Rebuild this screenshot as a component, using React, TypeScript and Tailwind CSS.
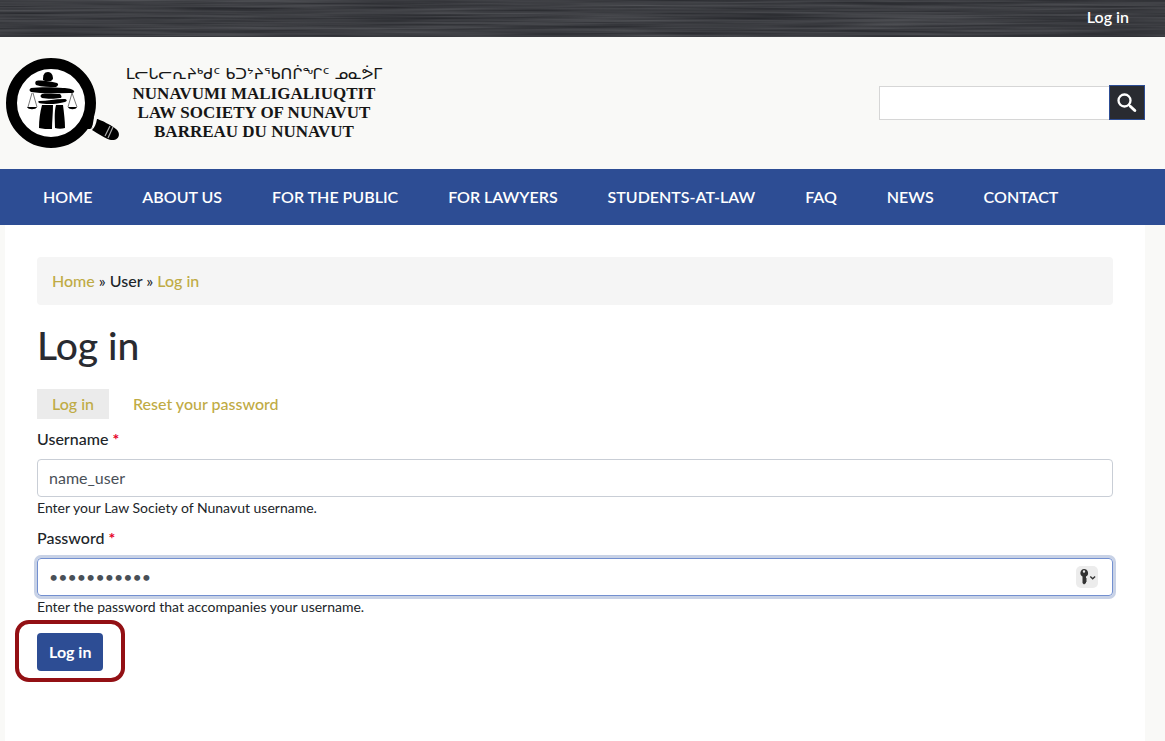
const navItems = ['Home', 'About us', 'For the public', 'For lawyers', 'Students-at-law', 'FAQ', 'News', 'Contact'];

function WoodGrain() {
  return (
    <svg className="absolute inset-0 h-full w-full" aria-hidden="true">
      <filter id="grain" x="0" y="0" width="100%" height="100%" colorInterpolationFilters="sRGB">
        <feTurbulence type="fractalNoise" baseFrequency="0.006 0.4" numOctaves="3" seed="8" />
        <feColorMatrix values="0.22 0 0 0 0.125  0.22 0 0 0 0.13  0.22 0 0 0 0.148  0 0 0 0 1" />
      </filter>
      <rect width="100%" height="100%" filter="url(#grain)" />
    </svg>
  );
}

function LogoMark() {
  return (
    <svg viewBox="0 0 116 92" className="h-[92px] w-[116px] shrink-0" aria-hidden="true">
      <circle cx="46" cy="46" r="39.5" fill="#fff" stroke="#000" strokeWidth="11" />
      <path d="M82 62 89 60 87 72 80 72Z" fill="#000" />
      <path d="M92 62c2 0 16 7 19 10 6 5 2 12-5 11-5-1-14-7-19-10 3-3 4-6 5-11Z" fill="#000" />
      <path d="M90 61c0 5-2 9-5 12" fill="none" stroke="#fff" strokeWidth="1" />
      <path d="m105 69-5 10M108 70l-5 11" fill="none" stroke="#aaa" strokeWidth="1.2" />
      <g fill="#000">
        <path d="M38 23c0-5 1-8 5-8s5 4 5 7l-2 2h-6Z" />
        <path d="M31 24c5-1 13 0 21 2 2 1 1 3-1 4-7 0-14 0-20-2-1-1-1-3 0-4Z" />
        <path d="M26 31c8-1 23-1 32 0 5 0 10 1 11 3s-2 2-5 2c-13 0-26 1-38-1-2-1-2-3 0-4Z" />
        <path d="M37 37c5-1 13 0 18 0 2 2 2 4 0 4-5 1-13 1-18 0-2-1-2-3 0-4Z" />
        <path d="M34 44c8 0 16-2 25-2 3 0 4 2 1 3-7 2-18 3-26 1-1-1-1-2 0-2Z" />
        <path d="M37 48h11c0 8-1 16-1 24-5 0-9 0-13-1 0-8 1-16 3-23Z" />
        <path d="M51 48h7c1 8 2 16 2 23-3 1-7 1-10 0 0-8-1-15 1-23Z" />
        <path d="M22 50h10c-1 3-9 3-10 0ZM63 50h9c-1 3-8 3-9 0Z" />
      </g>
      <path d="M27 36 23 50M28 36l4 14M67 36l-4 14M67 36l5 14" stroke="#555" strokeWidth=".8" />
    </svg>
  );
}

function Brand() {
  return (
    <a href="#" className="flex items-start text-[#161616]">
      <LogoMark />
      <span className="ml-1 flex w-[258px] flex-col items-center pt-[7px] font-['Liberation_Serif',serif] text-[17px] leading-[19px] font-bold whitespace-nowrap">
        <span className="font-['DejaVu_Sans',sans-serif] text-base leading-5 font-normal">ᒪᓕᒐᓕᕆᔨᒃᑯᑦ ᑲᑐᔾᔨᖃᑎᒌᖏᑦ ᓄᓇᕘᒥ</span>
        <span>NUNAVUMI MALIGALIUQTIT</span>
        <span>LAW SOCIETY OF NUNAVUT</span>
        <span>BARREAU DU NUNAVUT</span>
      </span>
    </a>
  );
}

function SearchIcon() {
  return (
    <svg viewBox="0 0 22 22" className="h-[22px] w-[22px]" fill="none" stroke="currentColor" aria-hidden="true">
      <circle cx="8.500" cy="8.500" r="6" strokeWidth="2.300" />
      <path d="m12.500 12.500 2 2" strokeWidth="2.200" />
      <path d="m14.500 14.500 4.300 4" strokeWidth="3" strokeLinecap="round" />
    </svg>
  );
}

function KeyBadge() {
  return (
    <button type="button" aria-label="Password options" className="absolute top-2 right-[15px] flex h-[22px] w-[22px] items-center justify-center rounded-[5px] bg-[#ececec]">
      <svg viewBox="0 0 22 22" className="h-[22px] w-[22px]" aria-hidden="true">
        <path fillRule="evenodd" d="M8 3a4 4 0 0 1 2 7.500V12l1 1-1 1 1 1-1 1v1l-2 1.500L6.500 17v-6.500A4 4 0 0 1 8 3Zm0 1.300a1.200 1.200 0 1 0 0 2.400 1.200 1.200 0 0 0 0-2.400Z" fill="#333" />
        <path d="m14.300 10.500 2.400 2.200 2.400-2.200" fill="none" stroke="#333" strokeWidth="1.400" />
      </svg>
    </button>
  );
}

export default function App() {
  return (
    <div className="flex min-h-screen flex-col bg-[#f9f9f7] font-['Lato',sans-serif] text-base font-medium text-[#212529]">
      <div className="relative flex h-[37px] items-start justify-end overflow-hidden bg-[#3c3d42] pt-[5px] pr-9">
        <WoodGrain />
        <a href="#" className="relative font-semibold text-white">Log in</a>
      </div>

      <header className="flex h-[132px] items-start justify-between pt-5 pr-5 pl-[5px]">
        <Brand />
        <form role="search" className="mt-7 flex items-center">
          <input type="search" aria-label="Search" className="h-[34px] w-[230px] border border-r-0 border-[#d6d6d6] bg-white px-2 outline-none" />
          <button type="button" aria-label="Search" className="flex h-[35px] w-9 items-center justify-center border border-[#2d4d94] bg-[#292b31] text-white">
            <SearchIcon />
          </button>
        </form>
      </header>

      <nav className="flex h-14 items-center gap-[50px] bg-[#2d4d94] pl-[43px] font-semibold whitespace-nowrap text-white uppercase">
        {navItems.map((item) => (
          <a key={item} href="#">{item}</a>
        ))}
      </nav>

      <main className="mr-5 ml-[5px] grow bg-white p-8">
        <nav aria-label="Breadcrumb" className="rounded bg-[#f5f5f5] px-[15px] py-3 leading-6">
          <a href="#" className="text-[#bfab45]">Home</a> » User » <a href="#" className="text-[#bfab45]">Log in</a>
        </nav>

        <h1 className="mt-4 text-[39px] leading-[48px] font-medium text-[#292b31]">Log in</h1>

        <div className="mt-5 flex h-[30px] gap-[9px] text-[#bfab45]">
          <a href="#" className="flex items-center bg-[#ebebeb] px-[15px]">Log in</a>
          <a href="#" className="flex items-center px-[15px]">Reset your password</a>
        </div>

        <form>
          <label htmlFor="username" className="mt-2 block leading-6">
            Username <span className="font-bold text-[#e6001f]">*</span>
          </label>
          <input id="username" type="text" defaultValue="name_user" className="mt-2 block h-[38px] w-full rounded border border-[#c9ced6] px-[11px] pb-0.5 font-normal text-[#495057] outline-none" />
          <p className="text-sm leading-[22px] font-normal">Enter your Law Society of Nunavut username.</p>

          <label htmlFor="password" className="mt-[7px] block leading-6">
            Password <span className="font-bold text-[#e6001f]">*</span>
          </label>
          <div className="relative mt-2">
            <input id="password" type="password" defaultValue="abcdefghijk" className="block h-[38px] w-full rounded border border-[#7390d0] px-[11px] pb-0.5 font-normal text-[#495057] ring-3 ring-[#c8d2e6] outline-none" />
            <KeyBadge />
          </div>
          <p className="text-sm leading-[22px] font-normal">Enter the password that accompanies your username.</p>

          <div className="mt-[2px] -ml-[22px] w-fit rounded-[14px] border-4 border-[#931014] px-[18px] pt-[9px] pb-[7px]">
            <button type="button" className="h-[38px] rounded bg-[#2d4d94] px-3 font-bold text-white">Log in</button>
          </div>
        </form>
      </main>
    </div>
  );
}
